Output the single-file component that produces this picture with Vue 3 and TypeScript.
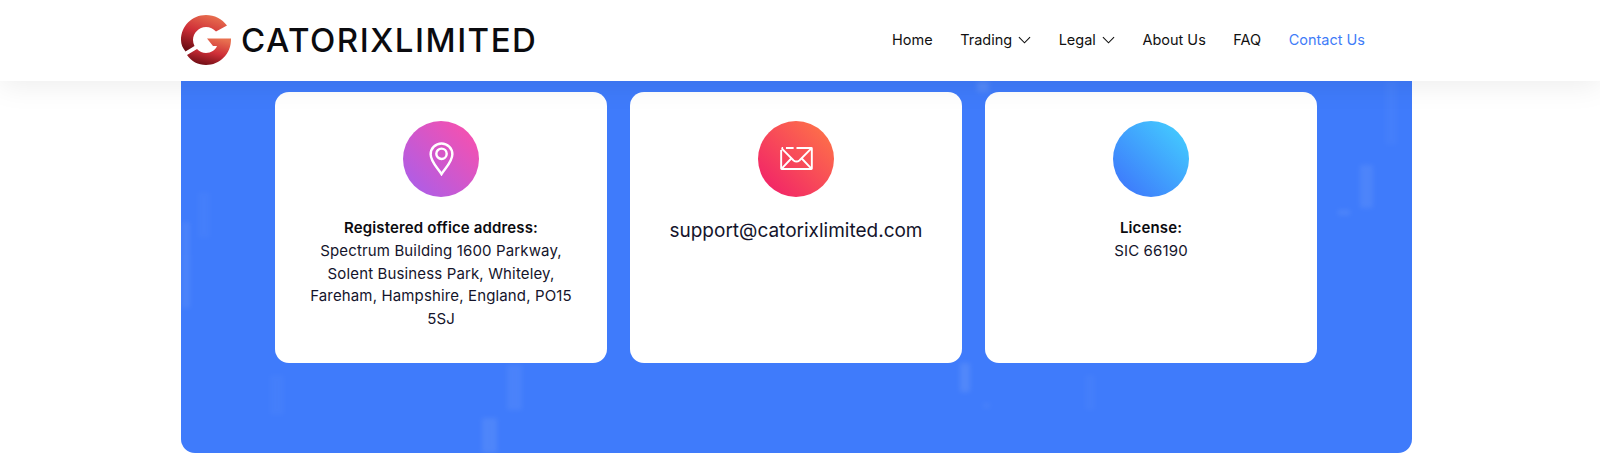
<template>
  <div class="page">
    <header class="site-header">
      <div class="brand">
        <svg class="brand-mark" viewBox="0 0 52 52" aria-hidden="true">
          <defs>
            <linearGradient id="markGrad" x1="0.7" y1="0" x2="0.3" y2="1">
              <stop offset="0" stop-color="#e8704f" />
              <stop offset="0.5" stop-color="#cf2f38" />
              <stop offset="1" stop-color="#6d0d14" />
            </linearGradient>
          </defs>
          <path
            fill="url(#markGrad)"
            d="M26 1 C34.500 1 42 5 47 11.500 L36 17.500 C33.500 14.800 30 13 26 13 C19 13 13 19 13 26 C13 28 13.500 30 14.500 32 L5.500 37.500 C2.800 34 1 30.500 1 26 C1 12 12 1 26 1 Z"
          />
          <path
            fill="url(#markGrad)"
            d="M27 24.500 L51 24.500 C51.500 40 39.500 51 26 51 C18 51 11.500 47.500 7 41 L17 35 C19.500 37.500 22.500 39 26 39 C31 39 35.500 36 37 32 L33 32 Z"
          />
        </svg>
        <span class="brand-name">CATORIXLIMITED</span>
      </div>
      <nav class="main-nav">
        <a v-for="item in navItems" :key="item.label" class="nav-link" :class="{ active: item.active }">
          {{ item.label }}
          <svg v-if="item.caret" class="caret" viewBox="0 0 14 8" aria-hidden="true">
            <path d="M1 1l6 6 6-6" />
          </svg>
        </a>
      </nav>
    </header>

    <section class="contact-panel">
      <span
        v-for="(c, i) in candles"
        :key="i"
        class="candle"
        :style="{ left: c[0] + 'px', top: c[1] + 'px', width: c[2] + 'px', height: c[3] + 'px', opacity: c[4] }"
      ></span>

      <div class="cards">
        <article class="card">
          <div class="icon-circle pink">
            <svg class="pin" viewBox="0 0 26 36" aria-hidden="true">
              <path d="M13 34 C9 27.500 1.500 21 1.500 13 A11.500 11.500 0 0 1 24.500 13 C24.500 21 17 27.500 13 34 Z" />
              <circle cx="13" cy="12.500" r="5.500" />
            </svg>
          </div>
          <p class="card-text">
            <strong>Registered office address:</strong><br />
            Spectrum Building 1600 Parkway, Solent Business Park, Whiteley, Fareham, Hampshire, England, PO15 5SJ
          </p>
        </article>

        <article class="card">
          <div class="icon-circle coral">
            <svg class="mail" viewBox="0 0 34 24" aria-hidden="true">
              <path d="M1 3 V22.500 a.5 .5 0 0 0 .5 .5 H32.500 a.5 .5 0 0 0 .5 -.5 V1.500 a.5 .5 0 0 0 -.5 -.5 H17" />
              <path d="M1.500 1 H3 M6 1 H14" />
              <path d="M1.500 1.500 L14 14 Q17 16.500 20 14 L32.500 1.500" />
              <path d="M1.500 22.500 L12 11.500 M32.500 22.500 L22 11.500" />
            </svg>
          </div>
          <p class="card-email">support@catorixlimited.com</p>
        </article>

        <article class="card">
          <div class="icon-circle sky"></div>
          <p class="card-text">
            <strong>License:</strong><br />
            SIC 66190
          </p>
        </article>
      </div>
    </section>
  </div>
</template>

<script setup lang="ts">
const navItems = [
  { label: "Home" },
  { label: "Trading", caret: true },
  { label: "Legal", caret: true },
  { label: "About Us" },
  { label: "FAQ" },
  { label: "Contact Us", active: true },
];

// faint chart candles in the panel background: x, y, width, height, opacity
const candles: number[][] = [
  [1, 141, 8, 86, 0.08],
  [17, 111, 12, 46, 0.03],
  [89, 294, 14, 40, 0.03],
  [326, 284, 15, 45, 0.07],
  [301, 337, 15, 35, 0.1],
  [779, 282, 10, 29, 0.12],
  [802, 322, 7, 5, 0.06],
  [904, 294, 10, 35, 0.03],
  [796, 0, 12, 11, 0.13],
  [1179, 84, 13, 43, 0.09],
  [1157, 129, 12, 5, 0.1],
  [1204, 0, 12, 64, 0.03],
];
</script>

<style>
html,
body {
  margin: 0;
  background: #fff;
}
</style>

<style scoped>
.page {
  width: 1600px;
  height: 465px;
  overflow: hidden;
  font-family: Inter, "Liberation Sans", sans-serif;
  color: #14142b;
}

.site-header {
  position: relative;
  z-index: 2;
  height: 81px;
  box-sizing: border-box;
  padding: 0 0 2px 180px;
  display: flex;
  align-items: center;
  background: #fff;
  box-shadow: 0 4px 30px rgba(0, 0, 0, 0.08);
}

.brand {
  display: flex;
  align-items: center;
  gap: 9px;
}

.brand-mark {
  width: 52px;
  height: 52px;
}

.brand-name {
  font-size: 33px;
  font-weight: 550;
  letter-spacing: 1.500px;
  color: #0b0b0f;
}

.main-nav {
  margin-left: auto;
  margin-right: 235px;
  display: flex;
  align-items: center;
  gap: 27.500px;
}

.nav-link {
  display: flex;
  align-items: center;
  gap: 6px;
  font-size: 14.500px;
  font-weight: 400;
  color: #111;
}

.nav-link.active {
  color: #3f7cf8;
}

.caret {
  width: 13px;
  height: 8px;
  fill: none;
  stroke: #111;
  stroke-width: 1.200;
}

.contact-panel {
  position: relative;
  width: 1231px;
  height: 372px;
  margin-left: 181px;
  box-sizing: border-box;
  padding-top: 11px;
  background: #3f7bfb;
  border-radius: 0 0 14px 14px;
  overflow: hidden;
}

.candle {
  position: absolute;
  background: #d6e2f2;
  filter: blur(2.500px);
}

.cards {
  position: relative;
  display: flex;
  justify-content: center;
  gap: 23px;
  padding-right: 1px;
}

.card {
  width: 332px;
  height: 271px;
  box-sizing: border-box;
  padding: 29px 28px 0;
  background: #fff;
  border-radius: 14px;
  text-align: center;
}

.icon-circle {
  width: 76px;
  height: 76px;
  margin: 0 auto;
  border-radius: 50%;
  display: flex;
  align-items: center;
  justify-content: center;
}

.pink {
  background: linear-gradient(45deg, #a45fee, #ff4fa8);
}

.coral {
  background: linear-gradient(45deg, #f01a6c, #ff7a45);
}

.sky {
  background: linear-gradient(45deg, #3d6ffb, #44d4ff);
}

.pin {
  width: 25px;
  height: 34px;
  margin-bottom: 1px;
  fill: none;
  stroke: #fff;
  stroke-width: 2.600;
}

.mail {
  width: 33px;
  height: 23px;
  margin-bottom: 1px;
  fill: none;
  stroke: #fff;
  stroke-width: 2;
}

.card-text {
  margin: 20px 0 0;
  font-size: 15px;
  letter-spacing: 0.140px;
  line-height: 22.800px;
}

.card-text strong {
  font-weight: 600;
  color: #0b0b0f;
}

.card-email {
  margin: 20px 0 0;
  font-size: 19px;
  line-height: 28px;
}
</style>
